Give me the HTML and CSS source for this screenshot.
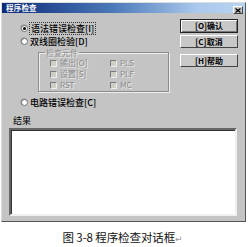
FILE: index.html
```html
<!DOCTYPE html>
<html lang="zh">
<head>
<meta charset="utf-8">
<link rel="stylesheet" href="styles.css">
</head>
<body>
<div class="page">
  <div class="dialog">
    <div class="titlebar">
      <span class="title">程序检查</span>
      <span class="close"><svg width="6" height="5" viewBox="0 0 6 5"><path d="M0.5 0.5 L5.5 4.5 M5.5 0.5 L0.5 4.5" stroke="#000" stroke-width="1.3"/></svg></span>
    </div>
    <div class="body">
      <div class="top">
        <div class="options">
          <div class="radio-row r1"><span class="radio checked"></span><span class="lbl focused">语法错误检查[I]</span></div>
          <div class="radio-row r2"><span class="radio"></span><span class="lbl">双线圈检验[D]</span></div>
          <fieldset class="group">
            <legend>检查元件</legend>
            <div class="checks">
              <div class="check"><span class="box"></span><span>输出[O]</span></div>
              <div class="check"><span class="box"></span><span>PLS</span></div>
              <div class="check"><span class="box"></span><span>设置[S]</span></div>
              <div class="check"><span class="box"></span><span>PLF</span></div>
              <div class="check"><span class="box"></span><span>RST</span></div>
              <div class="check"><span class="box"></span><span>MC</span></div>
            </div>
          </fieldset>
          <div class="radio-row r3"><span class="radio"></span><span class="lbl">电路错误检查[C]</span></div>
        </div>
        <div class="buttons">
          <div class="btn default">[O]确认</div>
          <div class="btn b2">[C]取消</div>
          <div class="btn b3">[H]帮助</div>
        </div>
      </div>
      <div class="result-label">结果</div>
      <div class="result-box"></div>
    </div>
  </div>
  <div class="caption">图 3-8 程序检查对话框<span class="ret">↵</span></div>
</div>
</body>
</html>
```
FILE: styles.css
```css
* { box-sizing: border-box; }
html, body { margin: 0; padding: 0; background: #fff; }
body { font-family: "Noto Sans CJK SC", "DejaVu Sans", sans-serif; color: #000; }
.page { width: 248px; height: 247px; padding-top: 2px; padding-left: 1px; }
.dialog {
  width: 245px; height: 220px;
  background: #c4c4c4;
  border: 1px solid;
  border-color: #dcdcdc #555 #555 #dcdcdc;
  display: flex; flex-direction: column;
}
.titlebar {
  height: 10px; flex: none;
  background: linear-gradient(to right, #0c2a78 0%, #4a78b8 45%, #a9c8ec 80%, #b8d4f2 100%);
  display: flex; align-items: center; justify-content: space-between;
  padding: 0 2px 0 4px;
}
.title { color: #fff; font-size: 7.5px; line-height: 10px; font-weight: bold; letter-spacing: 0.2px; }
.close {
  width: 10px; height: 8px; margin-top: 4px; background: #c8c8c8;
  border: 1px solid; border-color: #fff #444 #444 #fff;
  display: flex; align-items: center; justify-content: center;
}
.close svg { display: block; }
.body { flex: 1; display: flex; flex-direction: column; }
.top { display: flex; }
.options { width: 178px; padding: 10px 0 0 19px; font-size: 9px; }
.radio-row { display: flex; align-items: center; height: 11px; line-height: 11px; }
.r2 { margin-top: 2px; }
.r3 { margin-top: 5px; }
.radio {
  width: 7px; height: 7px; border-radius: 50%; flex: none;
  background: #fff; border: 1px solid #777;
  box-shadow: -0.5px -0.5px 0 #888;
  margin-right: 2px;
  display: flex; align-items: center; justify-content: center;
}
.radio.checked::after { content: ""; width: 3px; height: 3px; border-radius: 50%; background: #000; }
.lbl { white-space: nowrap; font-weight: 500; }
.lbl.focused { outline: 1px dotted #333; outline-offset: 0px; padding: 0 1px; }
.group {
  margin: 1px 0 0 17px; width: 131px;
  border: 1px solid #8c8c8c;
  box-shadow: 1px 1px 0 #eee, inset 1px 1px 0 #eee;
  padding: 1px 0 1px 11px;
}
.group legend {
  font-size: 8px; line-height: 9px; height: 9px;
  padding: 0 1px; margin-left: -5px;
  color: #8a8a8a; text-shadow: 1px 1px 0 #eee;
}
.checks { display: grid; grid-template-columns: 60px 50px; grid-auto-rows: 10px; row-gap: 1px; }
.check { display: flex; align-items: center; font-size: 8px; line-height: 10px; color: #8a8a8a; text-shadow: 1px 1px 0 #eee; white-space: nowrap; }
.check .box {
  width: 7px; height: 7px; flex: none; margin-right: 3px;
  background: #cfcfc6; border: 1px solid; border-color: #7a7a7a #eee #eee #7a7a7a;
}
.buttons { width: 58px; padding-top: 6px; display: flex; flex-direction: column; }
.btn {
  height: 13px; font-size: 8px; line-height: 11px; text-align: center; font-weight: 700;
  background: #c8c8c8; border: 1px solid; border-color: #fff #444 #444 #fff;
  white-space: nowrap;
}
.btn.default { height: 14px; border-color: #222; box-shadow: inset 1px 1px 0 #fff, inset -1px -1px 0 #777; line-height: 12px; }
.b2 { margin-top: 2px; }
.b3 { margin-top: 6px; }
.result-label { margin-top: 8px; height: 10px; line-height: 10px; padding-left: 11px; font-size: 9px; }
.result-box {
  margin: 2px 8px 0 7px; height: 88px;
  background: #fff; border: 2px solid; border-color: #666 #f0f0f0 #f0f0f0 #666;
  box-shadow: inset 1px 1px 0 #333;
}
.caption {
  margin-top: 9px; text-align: center; font-size: 11.5px; line-height: 13px;
  padding-right: 4px; color: #111; letter-spacing: -0.1px;
}
.ret { color: #999; font-size: 9px; }
```
